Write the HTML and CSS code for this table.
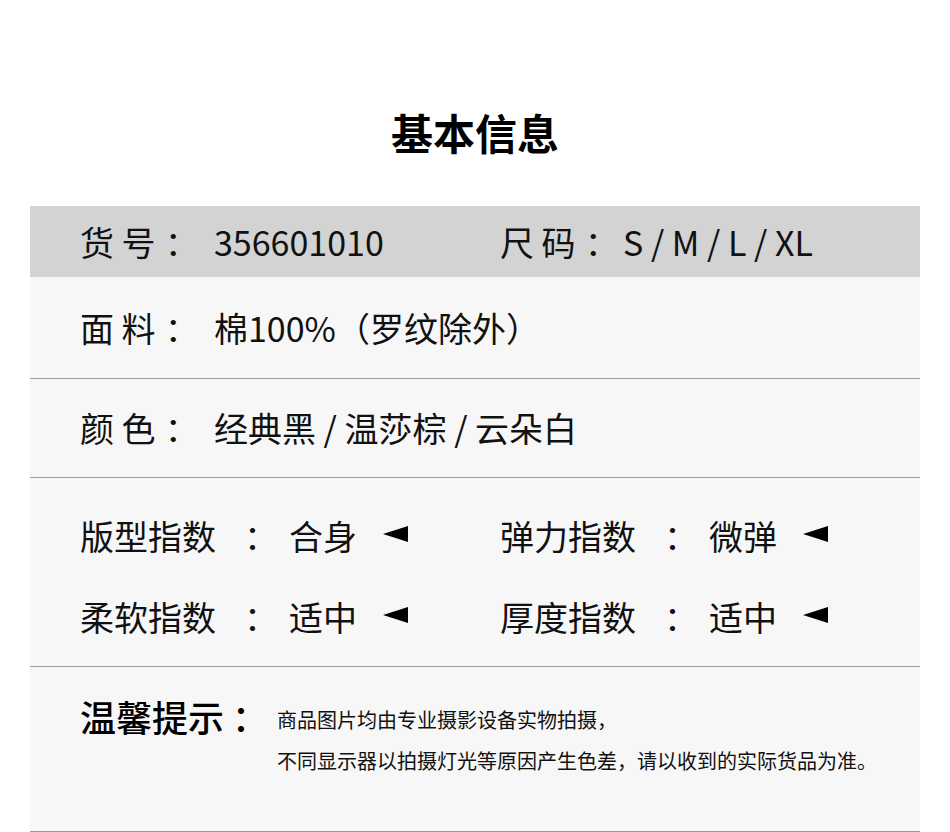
FILE: index.html
```html
<!DOCTYPE html>
<html lang="zh-CN">
<head>
<meta charset="utf-8">
<title>基本信息</title>
<link rel="stylesheet" href="styles.css">
</head>
<body>
<div class="page">
  <h1 class="title">基本信息</h1>
  <div class="table">
    <div class="row row-head">
      <span class="lbl lbl-sku">货 号<span class="colon">：</span></span>
      <span class="val val-sku">356601010</span>
      <span class="lbl lbl-size">尺 码<span class="colon">：</span></span>
      <span class="val">S / M / L / XL</span>
    </div>
    <div class="row row-single">
      <span class="lbl lbl-wide">面 料<span class="colon">：</span></span>
      <span class="val">棉100%（罗纹除外）</span>
    </div>
    <div class="row row-single row-color">
      <span class="lbl lbl-wide">颜 色<span class="colon">：</span></span>
      <span class="val">经典黑 / 温莎棕 / 云朵白</span>
    </div>
    <div class="row row-index">
      <div class="index-line">
        <div class="group">
          <span class="g-lbl">版型指数</span><span class="g-colon">：</span><span class="g-val">合身</span><span class="arrow"></span>
        </div>
        <div class="group">
          <span class="g-lbl">弹力指数</span><span class="g-colon">：</span><span class="g-val">微弹</span><span class="arrow"></span>
        </div>
      </div>
      <div class="index-line">
        <div class="group">
          <span class="g-lbl">柔软指数</span><span class="g-colon">：</span><span class="g-val">适中</span><span class="arrow"></span>
        </div>
        <div class="group">
          <span class="g-lbl">厚度指数</span><span class="g-colon">：</span><span class="g-val">适中</span><span class="arrow"></span>
        </div>
      </div>
    </div>
    <div class="row row-tip">
      <span class="tip-title">温馨提示<span class="tip-colon">：</span></span>
      <div class="tip-text">
        <p>商品图片均由专业摄影设备实物拍摄，</p>
        <p>不同显示器以拍摄灯光等原因产生色差，请以收到的实际货品为准。</p>
      </div>
    </div>
  </div>
</div>
</body>
</html>
```
FILE: styles.css
```css
* {
  box-sizing: border-box;
}
html, body {
  margin: 0;
  padding: 0;
  background: #ffffff;
}
body {
  font-family: "Noto Sans CJK SC", "Noto Sans", sans-serif;
  color: #111111;
}
.page {
  width: 950px;
  height: 832px;
  overflow: hidden;
}
.title {
  margin: 0;
  padding-top: 102px;
  height: 206px;
  font-size: 42px;
  font-weight: 700;
  line-height: 60px;
  text-align: center;
  color: #000;
}
.table {
  margin: 0 30px;
  background: #f7f7f7;
}
.row {
  padding-left: 50px;
  font-size: 34px;
  border-bottom: 1px solid #9c9c9c;
}
.row-head {
  display: grid;
  grid-template-columns: 134px 286px 123px auto;
  align-items: center;
  height: 71px;
  line-height: 71px;
  background: #d3d3d3;
  border-bottom: none;
}
.row-single {
  display: grid;
  grid-template-columns: 134px auto;
  align-items: center;
  height: 102px;
  line-height: 60px;
}
.row-color {
  height: 99px;
}
.lbl, .val {
  white-space: pre;
}
.colon {
  margin-left: 9px;
}
.row-index {
  padding-top: 17px;
  padding-bottom: 9px;
  height: 189px;
}
.index-line {
  display: flex;
  height: 81px;
  line-height: 81px;
  align-items: center;
}
.group {
  width: 420px;
  display: grid;
  grid-template-columns: 156px 53px 94px auto;
  align-items: center;
}
.g-colon {
  padding-left: 8px;
}
.arrow {
  display: block;
  width: 0;
  height: 0;
  border-right: 25px solid #000;
  border-top: 8.5px solid transparent;
  border-bottom: 8.5px solid transparent;
  margin-bottom: 4px;
}
.row-tip {
  display: flex;
  align-items: flex-start;
  padding-top: 29px;
  height: 165px;
}
.tip-title {
  font-size: 36px;
  font-weight: 500;
  line-height: 40px;
  white-space: nowrap;
  color: #000;
}
.tip-colon {
  display: inline-block;
  margin-left: 8px;
  width: 28px;
}
.tip-text {
  margin-left: 17px;
  margin-top: 3px;
  font-size: 20px;
  line-height: 41px;
}
.tip-text p {
  margin: 0;
  white-space: nowrap;
}
```
